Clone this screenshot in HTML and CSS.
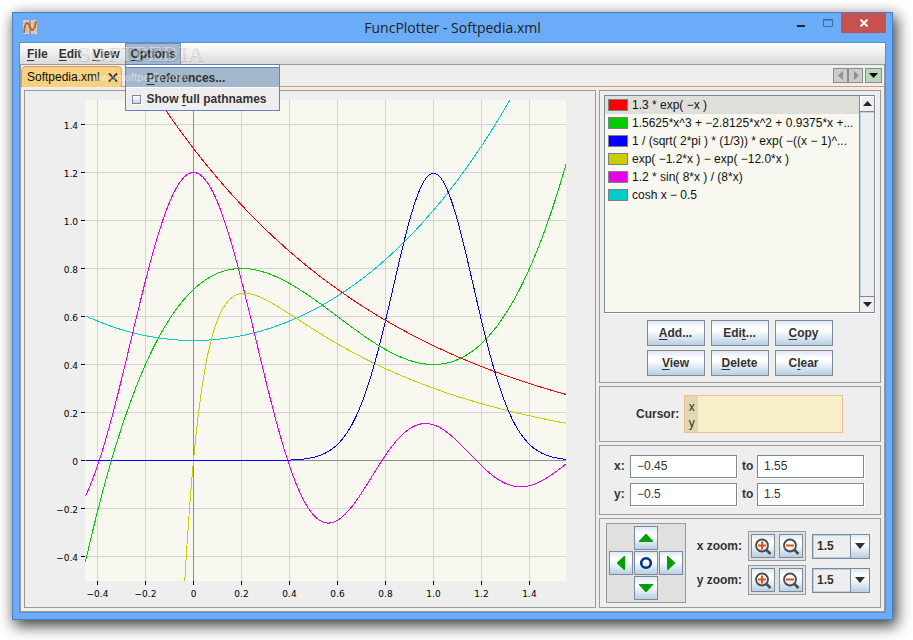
FILE: index.html
```html
<!DOCTYPE html>
<html lang="en">
<head>
  <meta charset="UTF-8" />
  <meta name="viewport" content="width=device-width, initial-scale=1" />
  <title>FuncPlotter - Softpedia.xml</title>
  <link rel="stylesheet" href="styles.css">
</head>
<body>
  <div class="window">
    <header class="titlebar">
      <svg class="app-icon" width="14" height="14" viewBox="0 0 14 14">
        <rect width="14" height="14" fill="#d9cfc0"/>
        <path d="M0 3.500h14M0 7.500h14M0 10.500h14M3.500 0v14M10.500 0v14" stroke="#c4baa9" fill="none"/>
        <path d="M7 0v14" stroke="#a39a8c" stroke-width="2"/>
        <path d="M1 13C1.500 6 2.500 3 4 3C7 3 6.500 10.500 9.500 10C11.500 9.500 12.500 5 13 1" stroke="#d2591a" stroke-width="1.800" fill="none"/>
      </svg>
      <h1 class="title">FuncPlotter - Softpedia.xml</h1>
      <div class="window-buttons">
        <button class="win-btn" aria-label="Minimize"><svg width="12" height="12"><path d="M2 9h8" stroke="#222" stroke-width="2"/></svg></button>
        <button class="win-btn" aria-label="Maximize"><svg width="12" height="12"><path d="M1.500 2.500h9v7h-9zM1 3h10" stroke="#41699c" fill="none"/></svg></button>
        <button class="win-btn close" aria-label="Close"><svg width="10" height="8"><path d="M1.500 .5l7 7M8.500 .5l-7 7" stroke="#fff" stroke-width="2"/></svg></button>
      </div>
    </header>

    <div class="frame">
      <nav class="menubar">
        <button class="menu"><u>F</u>ile</button>
        <button class="menu"><u>E</u>dit</button>
        <button class="menu"><u>V</u>iew</button>
        <div class="menu-holder">
          <button class="menu open"><u>O</u>ptions</button>
          <div class="popup">
            <button class="popup-item selected"><u>P</u>references...</button>
            <label class="popup-item"><input type="checkbox" class="check" id="fullPaths"><span>Show <u>f</u>ull pathnames</span></label>
          </div>
        </div>
        <div class="watermark" aria-hidden="true">
          <span class="mark-name">SOFTPEDIA</span>
          <span class="mark-url">www.softpedia.com</span>
        </div>
      </nav>

      <div class="body">
        <div class="tabs">
          <div class="tab">
            <span>Softpedia.xml</span>
            <button class="tab-close" aria-label="Close tab"><svg width="10" height="9"><path d="M1 .5l8 8M9 .5l-8 8" stroke="#222" stroke-width="1.800"/></svg></button>
          </div>
          <div class="tab-nav">
            <button aria-label="Previous tab"><svg width="13" height="13"><path d="M9 2v9L4 6.500z" fill="#909090"/></svg></button>
            <button aria-label="Next tab"><svg width="13" height="13"><path d="M5 2v9l5-4.500z" fill="#909090"/></svg></button>
            <button class="tab-list" aria-label="List tabs"><svg width="15" height="13"><path d="M3 4h9l-4.500 5z" fill="#000"/></svg></button>
          </div>
        </div>

        <main class="content">
          <section class="panel plot-panel">
            <svg class="plot" id="plot" viewBox="0 0 570 516"></svg>
          </section>

          <aside class="side">
            <section class="panel functions">
              <div class="listbox">
                <ul class="list">
                  <li class="selected"><i class="swatch red"></i>1.3 * exp( −x )</li>
                  <li><i class="swatch green"></i>1.5625*x^3 + −2.8125*x^2 + 0.9375*x +...</li>
                  <li><i class="swatch blue"></i>1 / (sqrt( 2*pi ) * (1/3)) * exp( −((x − 1)^...</li>
                  <li><i class="swatch yellow"></i>exp( −1.2*x ) − exp( −12.0*x )</li>
                  <li><i class="swatch magenta"></i>1.2 * sin( 8*x ) / (8*x)</li>
                  <li><i class="swatch cyan"></i>cosh x − 0.5</li>
                </ul>
                <div class="scrollbar">
                  <button class="scroll-up" aria-label="Scroll up"><svg width="9" height="5"><path d="M0 5h9L4.500 0z" fill="#222"/></svg></button>
                  <div class="thumb"></div>
                  <button class="scroll-down" aria-label="Scroll down"><svg width="9" height="5"><path d="M0 0h9L4.500 5z" fill="#222"/></svg></button>
                </div>
              </div>
              <div class="buttons">
                <button class="btn"><u>A</u>dd...</button>
                <button class="btn">Edi<u>t</u>...</button>
                <button class="btn"><u>C</u>opy</button>
                <button class="btn"><u>V</u>iew</button>
                <button class="btn"><u>D</u>elete</button>
                <button class="btn">C<u>l</u>ear</button>
              </div>
            </section>

            <section class="panel cursor">
              <span class="cursor-label">Cursor:</span>
              <div class="cursor-box">
                <div class="cursor-names"><span>x</span><span>y</span></div>
              </div>
            </section>

            <section class="panel range">
              <label for="xmin">x:</label>
              <input id="xmin" type="text" value="−0.45">
              <label for="xmax">to</label>
              <input id="xmax" type="text" value="1.55">
              <label for="ymin">y:</label>
              <input id="ymin" type="text" value="−0.5">
              <label for="ymax">to</label>
              <input id="ymax" type="text" value="1.5">
            </section>

            <section class="panel zoom">
              <div class="pad">
                <button class="btn icon up" aria-label="Up"><svg width="22" height="22"><path d="M4 15h14v-1L11.500 7h-1L4 14z" fill="#00a000"/></svg></button>
                <button class="btn icon left" aria-label="Left"><svg width="22" height="22"><path d="M15 4v14h-1L7 11.500v-1L14 4z" fill="#00a000"/></svg></button>
                <button class="btn icon center" aria-label="Center"><svg width="22" height="22"><circle cx="11" cy="11" r="4.800" stroke="#003090" stroke-width="2.600" fill="none"/></svg></button>
                <button class="btn icon right" aria-label="Right"><svg width="22" height="22"><path d="M7 4v14h1L15 11.500v-1L8 4z" fill="#00a000"/></svg></button>
                <button class="btn icon down" aria-label="Down"><svg width="22" height="22"><path d="M4 7h14v1L11.500 15h-1L4 8z" fill="#00a000"/></svg></button>
              </div>
              <div class="zoom-rows">
                <label for="xzoom">x zoom:</label>
                <div class="zoom-pair">
                  <button class="btn icon" aria-label="Zoom in x"><svg width="22" height="22"><use href="#lens"/><path d="M6 10.500h8M10 6.500v8" stroke="#e05010" stroke-width="2"/></svg></button>
                  <button class="btn icon" aria-label="Zoom out x"><svg width="22" height="22"><use href="#lens"/><path d="M6 10.500h8" stroke="#e05010" stroke-width="2"/></svg></button>
                </div>
                <div class="combo">
                  <select id="xzoom"><option>1.5</option><option>2</option><option>5</option></select>
                  <span class="combo-arrow"><svg width="10" height="6"><path d="M0 0h10L5 6z" fill="#333"/></svg></span>
                </div>
                <label for="yzoom">y zoom:</label>
                <div class="zoom-pair">
                  <button class="btn icon" aria-label="Zoom in y"><svg width="22" height="22"><use href="#lens"/><path d="M6 10.500h8M10 6.500v8" stroke="#e05010" stroke-width="2"/></svg></button>
                  <button class="btn icon" aria-label="Zoom out y"><svg width="22" height="22"><use href="#lens"/><path d="M6 10.500h8" stroke="#e05010" stroke-width="2"/></svg></button>
                </div>
                <div class="combo">
                  <select id="yzoom"><option>1.5</option><option>2</option><option>5</option></select>
                  <span class="combo-arrow"><svg width="10" height="6"><path d="M0 0h10L5 6z" fill="#333"/></svg></span>
                </div>
              </div>
            </section>
          </aside>
        </main>
      </div>
    </div>
  </div>

  <svg class="defs" width="0" height="0">
    <defs>
      <g id="lens">
        <circle cx="10" cy="10.500" r="6" fill="none" stroke="#4a4a4a" stroke-width="1.800"/>
        <path d="M14.500 15l4 4" stroke="#4a4a4a" stroke-width="2.500"/>
      </g>
    </defs>
  </svg>

  <script>
    const plot = document.getElementById('plot');
    const NS = 'http://www.w3.org/2000/svg';

    // plot area inside the svg, and pixels per unit
    const left = 60, top_ = 9, size = 481, unit = 240;
    const ox = 168.5, oy = 369.5;

    const functions = [
      ['#00cccc', x => Math.cosh(x) - 0.5],
      ['#e800e8', x => x === 0 ? 1.2 : 1.2 * Math.sin(8 * x) / (8 * x)],
      ['#cccc00', x => Math.exp(-1.2 * x) - Math.exp(-12 * x)],
      ['#0000ff', x => 3 / Math.sqrt(2 * Math.PI) * Math.exp(-18 * (x - 1) * (x - 1))],
      ['#00cc00', x => 1.5625 * x ** 3 - 2.8125 * x ** 2 + 0.9375 * x + 0.7125],
      ['#ff0000', x => 1.3 * Math.exp(-x)]
    ];

    function add(parent, tag, attrs, text) {
      const el = document.createElementNS(NS, tag);
      for (const key in attrs) el.setAttribute(key, attrs[key]);
      if (text) el.textContent = text;
      parent.appendChild(el);
      return el;
    }

    function format(i) {
      return i === 0 ? '0' : (i / 5).toFixed(1).replace('-', '−');
    }

    add(plot, 'rect', { x: left, y: top_, width: size, height: size, class: 'plot-area' });

    for (let i = -2; i <= 7; i++) {
      const x = ox + i * 48;
      const y = oy - i * 48;
      add(plot, 'path', { d: `M${x} ${top_}V${top_ + size}M${left} ${y}H${left + size}`, class: 'grid' });
      add(plot, 'path', { d: `M${x} ${top_ + size}v4M${left - 4} ${y}h4`, class: 'tick' });
      add(plot, 'text', { x: x, y: 506, class: 'x-label' }, format(i));
      add(plot, 'text', { x: 53, y: y + 4, class: 'y-label' }, format(i));
    }
    add(plot, 'path', { d: `M${ox} ${top_}v${size}M${left} ${oy}h${size}`, class: 'axis' });

    const clip = add(add(plot, 'defs', {}), 'clipPath', { id: 'area' });
    add(clip, 'rect', { x: left, y: top_, width: size, height: size });
    const curves = add(plot, 'g', { 'clip-path': 'url(#area)', class: 'curves' });

    functions.forEach(([color, f]) => {
      const points = [];
      for (let px = left; px <= left + size; px++) {
        const y = oy - unit * f((px + 0.5 - ox) / unit);
        points.push(`${px + 0.5},${y.toFixed(2)}`);
      }
      add(curves, 'polyline', { points: points.join(' '), stroke: color });
    });
  </script>
</body>
</html>
```
FILE: styles.css
```css
* {
  box-sizing: border-box;
}
body {
  margin: 0;
  min-height: 100vh;
  display: flex;
  padding: 12px 20px 20px 12px;
  background: #fff;
  color: #333;
  font: bold 12px/16px "Liberation Sans", Arial, sans-serif;
}
button, input, select {
  font: inherit;
  color: inherit;
  margin: 0;
  padding: 0;
  border: none;
  border-radius: 0;
  background: none;
}
svg {
  display: block;
}
u {
  text-underline-offset: 2px;
  text-decoration-skip-ink: none;
}
.defs {
  position: absolute;
}

.window {
  flex: 1;
  display: flex;
  flex-direction: column;
  min-width: 0;
  padding: 0 6px 6px;
  border: 1px solid #4a80c0;
  background: #6aacf8;
  box-shadow: 3px 5px 14px 1px rgba(0, 0, 0, 0.75);
}
.titlebar {
  display: grid;
  grid-template-columns: 1fr auto 1fr;
  height: 29px;
}
.app-icon {
  margin: 7px 4px;
}
.title {
  margin: 0;
  font: 14px/30px "Open Sans", "Segoe UI", sans-serif;
  color: #222;
}
.window-buttons {
  display: flex;
  justify-content: flex-end;
}
.win-btn {
  display: flex;
  align-items: center;
  justify-content: center;
  width: 27px;
  height: 20px;
}
.win-btn.close {
  width: 45px;
  background: #c75050;
}

.frame {
  flex: 1;
  display: flex;
  flex-direction: column;
  border: 1px solid #5a90d0;
  background: #eee;
}
.menubar {
  position: relative;
  display: flex;
  height: 22px;
  padding-left: 1px;
  border-bottom: 1px solid #999;
  background: linear-gradient(#fff, #dadada);
}
.menu {
  height: 21px;
  padding: 0 5px 0 6px;
}
.menu.open {
  background: #a3b8cc;
  box-shadow: inset 1px 1px #7a8a99, inset -1px 0 #7a8a99;
}
.menu-holder {
  position: relative;
}
.popup {
  position: absolute;
  z-index: 2;
  top: 21px;
  left: 0;
  width: 155px;
  padding: 2px 0 0;
  border: 1px solid #6382bf;
  background: #eee;
  box-shadow: inset 0 2px #fff;
}
.popup-item {
  display: flex;
  align-items: center;
  width: 100%;
  height: 22px;
  padding-left: 6px;
}
.popup-item.selected {
  height: 21px;
  padding-left: 21px;
  background: #a3b8cc;
  border-top: 1px solid #6382bf;
  border-bottom: 1px solid #fff;
}
.check {
  appearance: none;
  width: 9px;
  height: 9px;
  margin-right: 6px;
  border: 1px solid #7a8a99;
  background: linear-gradient(#fff, #c5d7e8);
  box-shadow: 1px 1px #fff;
}
.watermark {
  position: absolute;
  z-index: 3;
  top: 0;
  left: 58px;
  width: 124px;
  display: flex;
  flex-direction: column;
  align-items: center;
  pointer-events: none;
  color: rgba(255, 255, 255, 0.4);
}
.mark-name {
  font: bold 22px/22px "Liberation Serif", serif;
  text-shadow: 1px 1px rgba(0, 0, 0, 0.12);
}
.mark-url {
  font: bold 10px/26px "Liberation Sans", sans-serif;
}

.body {
  flex: 1;
  display: flex;
  flex-direction: column;
  border: 1px solid #999;
  border-top: none;
}
.tabs {
  display: flex;
  justify-content: space-between;
  height: 22px;
  border-bottom: 1px solid #e8965a;
}
.tab {
  display: flex;
  align-items: center;
  gap: 8px;
  height: 21px;
  margin-top: 1px;
  padding: 0 3px 0 5px;
  border: 1px solid #e8965a;
  border-bottom: none;
  border-radius: 5px 5px 0 0;
  background: #f7d080;
  color: #111;
  font-weight: normal;
}
.tab-nav {
  display: flex;
  padding: 3px 2px 0 0;
}
.tab-nav button {
  height: 15px;
  border: 1px solid #8c8c8c;
  background: #ccc;
}
.tab-nav .tab-list {
  margin-left: 2px;
  background: #b8d6b8;
}

.content {
  flex: 1;
  display: flex;
  gap: 3px;
  padding: 3px;
}
.panel {
  border: 1px solid #999;
}
.plot-panel {
  flex: 1;
  min-width: 0;
}
.plot {
  width: 100%;
  height: 100%;
  font: 9px "DejaVu Sans", sans-serif;
  fill: #000;
}
.plot-area {
  fill: #f8f8f0;
}
.grid, .tick, .axis {
  fill: none;
  stroke: #d4d4d4;
  shape-rendering: crispEdges;
}
.tick {
  stroke: #000;
}
.axis {
  stroke: #8c8c8c;
}
.x-label {
  text-anchor: middle;
}
.y-label {
  text-anchor: end;
}
.curves {
  fill: none;
  shape-rendering: crispEdges;
}

.side {
  width: 282px;
  display: flex;
  flex-direction: column;
  gap: 3px;
}
.functions {
  flex: 1;
  display: flex;
  flex-direction: column;
  gap: 7px;
  padding: 4px 5px 6px 4px;
}
.listbox {
  flex: 1;
  display: flex;
  border: 1px solid #7a8a99;
  background: #f8f8f0;
  box-shadow: 1px 1px #fff;
}
.list {
  flex: 1;
  min-width: 0;
  margin: 0;
  padding: 0;
  list-style: none;
  color: #111;
  font-weight: normal;
}
.list li {
  display: flex;
  align-items: center;
  gap: 4px;
  height: 18px;
  padding-left: 3px;
  overflow: hidden;
  line-height: 18px;
  white-space: pre;
}
.list .selected {
  background: #dfdfda;
}
.swatch {
  flex: none;
  width: 20px;
  height: 12px;
  border: 1px solid #808080;
}
.red { background: #f00; }
.green { background: #0c0; }
.blue { background: #00f; }
.yellow { background: #cc0; }
.magenta { background: #e800e8; }
.cyan { background: #0cc; }
.scrollbar {
  width: 15px;
  display: flex;
  flex-direction: column;
  border-left: 1px solid #7a8a99;
  background: #eee;
}
.scrollbar button {
  display: flex;
  align-items: center;
  justify-content: center;
  height: 15px;
}
.scroll-up {
  box-shadow: inset 1px 1px #fff;
}
.thumb {
  flex: 1;
  border: 1px solid #7a8a99;
  border-width: 1px 0;
  box-shadow: inset 1px 1px #b8cfe5;
}
.buttons {
  display: grid;
  grid-template-columns: repeat(3, 58px);
  justify-content: center;
  gap: 4px 6px;
}
.btn {
  height: 26px;
  border: 1px solid #7a8a99;
  background: linear-gradient(#dde8f3, #fff 30%, #fff 40%, #b8cfe5);
}
.btn.icon {
  width: 24px;
  height: 24px;
}

.cursor {
  display: flex;
  align-items: center;
  height: 56px;
  gap: 5px;
  padding-left: 36px;
}
.cursor-box {
  width: 159px;
  height: 38px;
  border: 1px solid #f0be90;
  background: #f8eec8;
}
.cursor-names {
  display: flex;
  flex-direction: column;
  align-items: center;
  width: 13px;
  height: 100%;
  padding-top: 3px;
  background: #dfd8b0;
  font-weight: normal;
}

.range {
  display: grid;
  grid-template-columns: 11px 107px 10px 107px;
  align-content: center;
  align-items: center;
  gap: 5px;
  height: 70px;
  padding-left: 14px;
}
.range input {
  width: 100%;
  height: 23px;
  padding: 0 6px;
  border: 1px solid #7a8a99;
  background: #fff;
  box-shadow: 1px 1px #fff;
  font-weight: normal;
}

.zoom {
  display: flex;
  align-items: center;
  justify-content: space-between;
  height: 90px;
  padding: 0 10px 0 6px;
}
.pad {
  display: grid;
  grid-template-columns: repeat(3, 24px);
  grid-template-areas: ". up ." "left center right" ". down .";
  gap: 1px;
  padding: 2px;
  border: 1px solid #999;
  background: #e0e0e0;
}
.up { grid-area: up; }
.left { grid-area: left; }
.center { grid-area: center; }
.right { grid-area: right; }
.down { grid-area: down; }
.zoom-rows {
  display: grid;
  grid-template-columns: auto 58px 58px;
  align-items: center;
  gap: 4px 6px;
}
.zoom-pair {
  display: flex;
  justify-content: space-between;
  padding: 2px;
  border: 1px solid #999;
  background: #e0e0e0;
}
.combo {
  display: grid;
  grid-template-columns: 1fr 19px;
  height: 25px;
  border: 1px solid #7a8a99;
}
.combo select {
  grid-area: 1 / 1 / 2 / 3;
  appearance: none;
  padding-left: 4px;
  box-shadow: inset 0 0 0 1px #b8cfe5;
}
.combo-arrow {
  grid-area: 1 / 2;
  display: flex;
  align-items: center;
  justify-content: center;
  border-left: 1px solid #7a8a99;
  background: linear-gradient(#dde8f3, #fff 30%, #fff 40%, #b8cfe5);
  pointer-events: none;
}
```
